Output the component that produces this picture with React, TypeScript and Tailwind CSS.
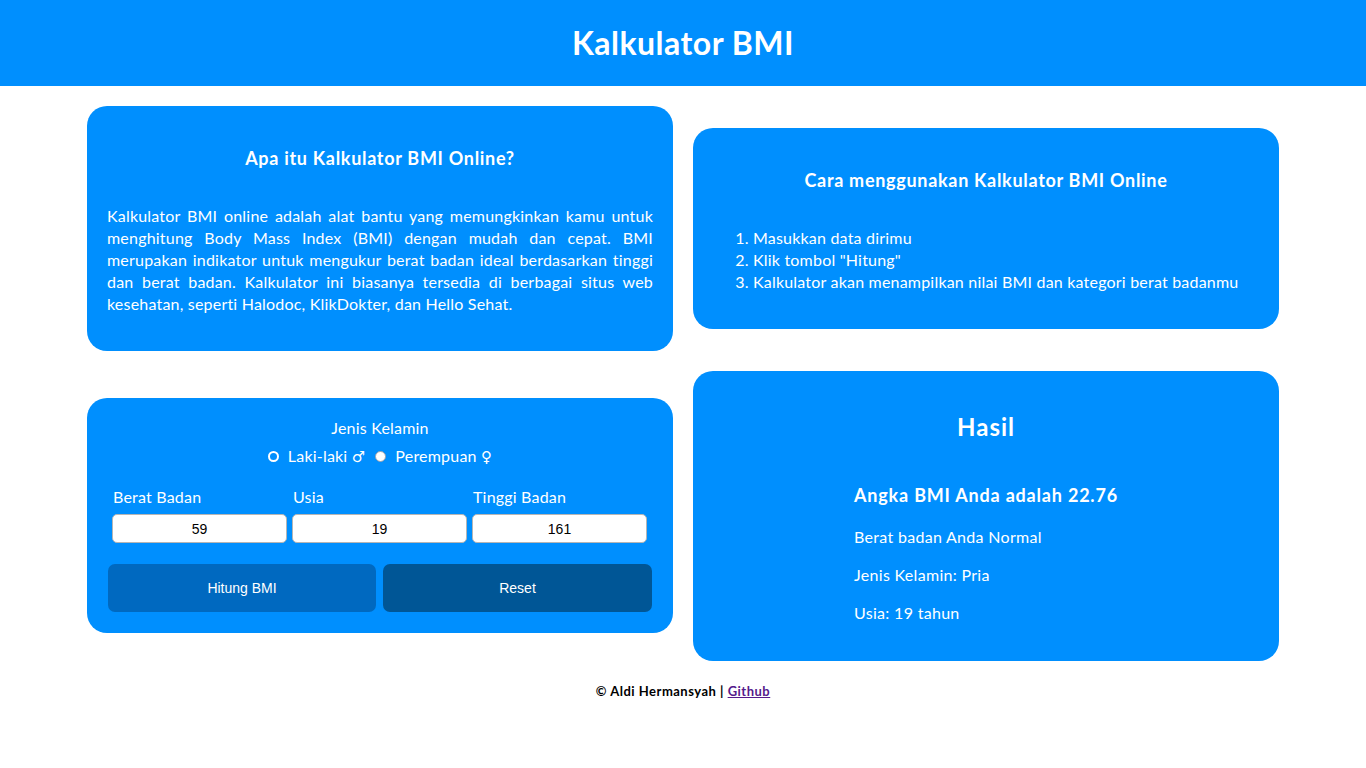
import { useState } from "react";

const sym = "font-['DejaVu_Sans',sans-serif] text-[15px]";

function Card({ children, className = "" }: { children: React.ReactNode; className?: string }) {
  return (
    <div className={`bg-[#008ffe] text-white rounded-[20px] px-5 ${className}`}>
      {children}
    </div>
  );
}

export default function App() {
  const [gender, setGender] = useState("pria");
  const [berat, setBerat] = useState("59");
  const [usia, setUsia] = useState("19");
  const [tinggi, setTinggi] = useState("161");

  const bmi = (Number(berat) / Math.pow(Number(tinggi) / 100, 2)).toFixed(2);
  const radio =
    "appearance-none w-[11px] h-[11px] rounded-full border-2 border-white bg-transparent not-checked:bg-white not-checked:border not-checked:border-gray-400";

  return (
    <div className="min-h-screen bg-white font-['Lato','Noto_Sans',sans-serif] tracking-[0.2px]">
      <header className="h-[86px] bg-[#008ffe] flex items-center justify-center">
        <h1 className="text-white text-[32px] font-bold tracking-[0.5px]">Kalkulator BMI</h1>
      </header>

      <main className="w-[1192px] mx-auto pt-5 flex flex-col gap-5">
        <div className="flex items-center gap-5">
          <Card className="w-[586px] pt-10 pb-9">
            <h3 className="text-center text-lg font-bold leading-6 tracking-[0.7px]">
              Apa itu Kalkulator BMI Online?
            </h3>
            <p className="mt-[35px] text-base leading-[22px] text-justify">
              Kalkulator BMI online adalah alat bantu yang memungkinkan kamu untuk menghitung Body Mass
              Index (BMI) dengan mudah dan cepat. BMI merupakan indikator untuk mengukur berat badan ideal
              berdasarkan tinggi dan berat badan. Kalkulator ini biasanya tersedia di berbagai situs web
              kesehatan, seperti Halodoc, KlikDokter, dan Hello Sehat.
            </p>
          </Card>
          <Card className="w-[586px] pt-10 pb-9">
            <h3 className="text-center text-lg font-bold leading-6 tracking-[0.7px]">
              Cara menggunakan Kalkulator BMI Online
            </h3>
            <ol className="mt-[35px] list-decimal pl-10 text-base leading-[22px]">
              <li>Masukkan data dirimu</li>
              <li>Klik tombol "Hitung"</li>
              <li>Kalkulator akan menampilkan nilai BMI dan kategori berat badanmu</li>
            </ol>
          </Card>
        </div>

        <div className="flex items-start gap-5">
          <Card className="w-[586px] mt-[27px] pt-5 pb-[21px] !px-0">
            <div className="text-center text-base leading-5">Jenis Kelamin</div>
            <div className="mt-2 flex items-center justify-center gap-[10px] text-base leading-5">
              <label className="flex items-center gap-[9px]">
                <input
                  type="radio"
                  name="jk"
                  checked={gender === "pria"}
                  onChange={() => setGender("pria")}
                  className={radio}
                />
                <span>
                  Laki-laki <span className={sym}>♂</span>
                </span>
              </label>
              <label className="flex items-center gap-[9px]">
                <input
                  type="radio"
                  name="jk"
                  checked={gender === "wanita"}
                  onChange={() => setGender("wanita")}
                  className={radio}
                />
                <span>
                  Perempuan <span className={sym}>♀</span>
                </span>
              </label>
            </div>

            <div className="mt-5 ml-[25px] grid grid-cols-[175px_175px_175px] gap-x-[5px]">
              {[
                ["Berat Badan", berat, setBerat],
                ["Usia", usia, setUsia],
                ["Tinggi Badan", tinggi, setTinggi],
              ].map(([label, value, set]: any) => (
                <div key={label} className="flex flex-col">
                  <span className="pl-px text-base leading-5">{label}</span>
                  <input
                    value={value}
                    onChange={(e) => set(e.target.value)}
                    className="mt-[7px] h-[29px] bg-white border border-[#b5b5b5] rounded-[5px] text-center text-sm text-black tracking-normal font-['Liberation_Sans',Arial,sans-serif] outline-none"
                  />
                </div>
              ))}
            </div>

            <div className="mt-[21px] ml-[21px] flex gap-[7px]">
              <button className="w-[268px] h-12 rounded-[7px] bg-[#0069c0] text-white text-sm tracking-normal font-['Liberation_Sans',Arial,sans-serif]">
                Hitung BMI
              </button>
              <button className="w-[269px] h-12 rounded-[7px] bg-[#005696] text-white text-sm tracking-normal font-['Liberation_Sans',Arial,sans-serif]">
                Reset
              </button>
            </div>
          </Card>

          <Card className="w-[586px] pt-[42px] pb-[37px]">
            <h2 className="text-center text-2xl font-bold leading-7 tracking-[1px]">Hasil</h2>
            <div className="mt-[42px] flex justify-center">
              <div className="text-left">
                <div className="text-lg font-bold leading-6 tracking-[0.8px]">Angka BMI Anda adalah {bmi}</div>
                <div className="mt-[19px] text-base leading-[22px] tracking-[0.3px]">Berat badan Anda Normal</div>
                <div className="mt-4 text-base leading-[22px] tracking-[0.3px]">
                  Jenis Kelamin: {gender === "pria" ? "Pria" : "Wanita"}
                </div>
                <div className="mt-4 text-base leading-[22px] tracking-[0.3px]">Usia: {usia} tahun</div>
              </div>
            </div>
          </Card>
        </div>
      </main>

      <footer className="mt-[21px] text-center text-[13px] font-bold text-black tracking-[0.5px]">
        © Aldi Hermansyah |{" "}
        <a href="#" className="underline text-[#551a8b]">
          Github
        </a>
      </footer>
    </div>
  );
}
